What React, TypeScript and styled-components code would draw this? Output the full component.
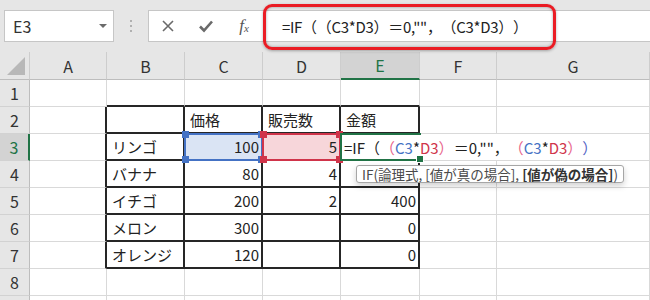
import React from "react";
import styled, { createGlobalStyle } from "styled-components";

const GREEN = "#217346";
const BLUE = "#4472c4";
const RED = "#d0344a";
const PINK = "#e8648a";
const GRID = "#d9d9d9";
const INK = "#262626";

const GlobalStyle = createGlobalStyle`
  html, body { margin: 0; padding: 0; background: #fff; }
  body {
    font-family: "Noto Sans CJK JP", "Liberation Sans", sans-serif;
    text-spacing-trim: space-all;
    overflow: hidden;
  }
`;

const Frame = styled.div`
  width: 650px;
  height: 300px;
  overflow: hidden;
  background: #e6e6e6;
  display: flex;
  flex-direction: column;
`;

const TopBar = styled.div`
  height: 52px;
  flex: none;
  box-sizing: border-box;
  padding: 10px 0 0 4px;
  display: flex;
  align-items: flex-start;
`;

const NameBox = styled.div`
  width: 110px;
  height: 32px;
  box-sizing: border-box;
  background: #fff;
  border: 1px solid #c6c6c6;
  display: flex;
  align-items: center;
  justify-content: space-between;
  padding: 0 6px 0 8px;
  font-size: 16px;
  color: #333;
`;

const Caret = styled.span`
  width: 0;
  height: 0;
  border-left: 4px solid transparent;
  border-right: 4px solid transparent;
  border-top: 4px solid #6b6b6b;
`;

const Splitter = styled.div`
  width: 34px;
  height: 32px;
  display: flex;
  flex-direction: column;
  align-items: center;
  justify-content: center;
  gap: 3px;
  span {
    width: 2px;
    height: 2px;
    background: #b0b0b0;
  }
`;

const FormulaBar = styled.div`
  flex: 1;
  height: 32px;
  box-sizing: border-box;
  background: #fff;
  border: 1px solid #c6c6c6;
  border-right: none;
  position: relative;
  display: flex;
  align-items: center;
`;

const IconSlot = styled.div`
  width: 38px;
  height: 30px;
  display: flex;
  align-items: center;
  justify-content: center;
  color: #666;
`;

const Fx = styled.span`
  font-family: "Liberation Serif", serif;
  font-style: italic;
  font-size: 17px;
  color: #555;
  sub {
    font-size: 11px;
    vertical-align: -1px;
  }
`;

const FormulaText = styled.div`
  margin-left: 19px;
  display: flex;
  align-items: center;
  font-size: 15px;
  letter-spacing: -0.3px;
  color: #222;
  white-space: nowrap;
`;

const Highlight = styled.div`
  position: absolute;
  left: 114px;
  top: -7px;
  width: 293px;
  height: 46px;
  box-sizing: border-box;
  border: 3px solid #ea1c24;
  border-radius: 9px;
  box-shadow: 0 1px 3px rgba(0, 0, 0, 0.3), inset 0 0 3px rgba(0, 0, 0, 0.35);
`;

const Sheet = styled.div`
  flex: 1;
  display: grid;
  grid-template-columns: 30px 77px 78px 78px 78px 79px 77px 1fr;
  grid-template-rows: 28px repeat(9, 27px);
  background: #fff;
`;

const ColHead = styled.div<{ $active?: boolean }>`
  box-sizing: border-box;
  background: ${(p) => (p.$active ? "#d3d3d3" : "#e6e6e6")};
  color: ${(p) => (p.$active ? GREEN : "#333")};
  border-right: 1px solid #cdcdcd;
  border-bottom: ${(p) => (p.$active ? `2px solid ${GREEN}` : "1px solid #bdbdbd")};
  display: flex;
  align-items: center;
  justify-content: center;
  font-size: 16px;
`;

const Corner = styled(ColHead)`
  position: relative;
  &::after {
    content: "";
    position: absolute;
    right: 4px;
    bottom: 4px;
    width: 0;
    height: 0;
    border-left: 18px solid transparent;
    border-bottom: 18px solid #b8b8b8;
  }
`;

const RowHead = styled.div<{ $active?: boolean }>`
  box-sizing: border-box;
  background: ${(p) => (p.$active ? "#d3d3d3" : "#e6e6e6")};
  color: ${(p) => (p.$active ? GREEN : "#333")};
  border-right: ${(p) => (p.$active ? `2px solid ${GREEN}` : "1px solid #bdbdbd")};
  border-bottom: 1px solid #d2d2d2;
  display: flex;
  align-items: center;
  justify-content: center;
  font-size: 16px;
`;

const Cell = styled.div<{ $num?: boolean; $rb: string; $bb: string; $fill?: string }>`
  position: relative;
  box-sizing: border-box;
  background: ${(p) => p.$fill || "#fff"};
  border-right: ${(p) => (p.$rb === INK ? "2px" : "1px")} solid ${(p) => p.$rb};
  border-bottom: ${(p) => (p.$bb === INK ? "2px" : "1px")} solid ${(p) => p.$bb};
  display: flex;
  align-items: center;
  justify-content: ${(p) => (p.$num ? "flex-end" : "flex-start")};
  padding: 0 2px 0 5px;
  font-size: 15px;
  color: #222;
  white-space: nowrap;
`;

const SelFrame = styled.div<{ $c: string }>`
  position: absolute;
  left: -1px;
  top: -1px;
  right: -2px;
  bottom: -2px;
  border: 2px solid ${(p) => p.$c};
  z-index: 1;
`;

const Handle = styled.span<{ $c: string; $x: "l" | "r"; $y: "t" | "b" }>`
  position: absolute;
  width: 7px;
  height: 7px;
  background: ${(p) => p.$c};
  ${(p) => (p.$x === "l" ? "left: -4px;" : "right: -4px;")}
  ${(p) => (p.$y === "t" ? "top: -4px;" : "bottom: -4px;")}
`;

const Editor = styled.div`
  position: absolute;
  left: 0;
  top: 0;
  width: 262px;
  height: 26px;
  background: #fff;
  z-index: 3;
  display: flex;
  align-items: center;
  padding-left: 3px;
  box-sizing: border-box;
  font-size: 15px;
  color: #222;
  white-space: nowrap;
`;

const Part = styled.span<{ $c?: string }>`
  color: ${(p) => p.$c || "#222"};
`;

const ActiveFrame = styled.div`
  position: absolute;
  left: -1px;
  top: -1px;
  width: 81px;
  bottom: -2px;
  box-sizing: border-box;
  border: 2px solid ${GREEN};
  border-right: none;
  z-index: 4;
`;

const FillHandle = styled.span`
  position: absolute;
  right: -3px;
  bottom: -4px;
  width: 6px;
  height: 6px;
  background: ${GREEN};
  border: 1px solid #fff;
`;

const Tooltip = styled.div`
  position: absolute;
  left: 15px;
  top: 31px;
  height: 18px;
  box-sizing: border-box;
  padding: 0 5px;
  display: flex;
  align-items: center;
  background: #fff;
  border: 1px solid #a6a6a6;
  border-radius: 3px;
  box-shadow: 0 3px 6px rgba(0, 0, 0, 0.18);
  font-size: 13.5px;
  color: #4a4a4a;
  white-space: pre;
  z-index: 5;
  b {
    font-weight: 700;
    color: #333;
  }
`;

const COLS = ["A", "B", "C", "D", "E", "F", "G"];

const DATA: Record<string, string> = {
  C2: "価格",
  D2: "販売数",
  E2: "金額",
  B3: "リンゴ",
  C3: "100",
  D3: "5",
  B4: "バナナ",
  C4: "80",
  D4: "4",
  B5: "イチゴ",
  C5: "200",
  D5: "2",
  E5: "400",
  B6: "メロン",
  C6: "300",
  E6: "0",
  B7: "オレンジ",
  C7: "120",
  E7: "0",
};

// formula split into pieces; colour is only used while editing in the cell
const FORMULA: [string, string?][] = [
  ["=IF（"],
  ["（", PINK],
  ["C3", BLUE],
  ["*"],
  ["D3", RED],
  ["）", PINK],
  ['＝0,""，'],
  ["（", PINK],
  ["C3", BLUE],
  ["*"],
  ["D3", RED],
  ["）", PINK],
  ["）", "#5162c4"],
];

const Formula = ({ colored }: { colored?: boolean }) => (
  <>
    {FORMULA.map(([t, c], i) => (
      <Part key={i} $c={colored ? c : undefined}>
        {t}
      </Part>
    ))}
  </>
);

const inTable = (r: number, c: number) => r >= 2 && r <= 7 && c >= 1 && c <= 4;

const Corners = ({ color }: { color: string }) => (
  <SelFrame $c={color}>
    <Handle $c={color} $x="l" $y="t" />
    <Handle $c={color} $x="r" $y="t" />
    <Handle $c={color} $x="l" $y="b" />
    <Handle $c={color} $x="r" $y="b" />
  </SelFrame>
);

const CellEditor = () => (
  <>
    <Editor>
      <Formula colored />
    </Editor>
    <ActiveFrame>
      <FillHandle />
    </ActiveFrame>
    <Tooltip>
      {"IF(論理式, [値が真の場合], "}
      <b>[値が偽の場合]</b>)
    </Tooltip>
  </>
);

export default function App() {
  const rows = [1, 2, 3, 4, 5, 6, 7, 8, 9];
  return (
    <Frame>
      <GlobalStyle />
      <TopBar>
        <NameBox>
          E3
          <Caret />
        </NameBox>
        <Splitter>
          <span />
          <span />
          <span />
        </Splitter>
        <FormulaBar>
          <IconSlot>
            <svg width="14" height="14" viewBox="0 0 14 14">
              <path d="M2 2 L12 12 M12 2 L2 12" stroke="#6a6a6a" strokeWidth="1.6" fill="none" />
            </svg>
          </IconSlot>
          <IconSlot>
            <svg width="16" height="14" viewBox="0 0 16 14">
              <path d="M2 7.5 L6 11.5 L14 2.5" stroke="#6a6a6a" strokeWidth="2.6" fill="none" />
            </svg>
          </IconSlot>
          <IconSlot>
            <Fx>
              f<sub>x</sub>
            </Fx>
          </IconSlot>
          <FormulaText>
            <Formula />
          </FormulaText>
          <Highlight />
        </FormulaBar>
      </TopBar>
      <Sheet>
        <Corner />
        {COLS.map((c) => (
          <ColHead key={c} $active={c === "E"}>
            {c}
          </ColHead>
        ))}
        {rows.map((r) => (
          <React.Fragment key={r}>
            {/* row 9 is only a sliver at the bottom edge, its number is out of view */}
            <RowHead $active={r === 3}>{r < 9 ? r : ""}</RowHead>
            {COLS.map((col, c) => {
              const id = col + r;
              const v = DATA[id] ?? "";
              const rb = inTable(r, c) || (c === 0 && r >= 2 && r <= 7) ? INK : GRID;
              const bb = inTable(r, c) || (r === 1 && c >= 1 && c <= 4) ? INK : GRID;
              const fill = id === "C3" ? "#dae4f4" : id === "D3" ? "#f7d6da" : undefined;
              return (
                <Cell key={id} $num={/^\d+$/.test(v)} $rb={rb} $bb={bb} $fill={fill}>
                  {v}
                  {id === "C3" && <Corners color={BLUE} />}
                  {id === "D3" && <Corners color={RED} />}
                  {id === "E3" && <CellEditor />}
                </Cell>
              );
            })}
          </React.Fragment>
        ))}
      </Sheet>
    </Frame>
  );
}
